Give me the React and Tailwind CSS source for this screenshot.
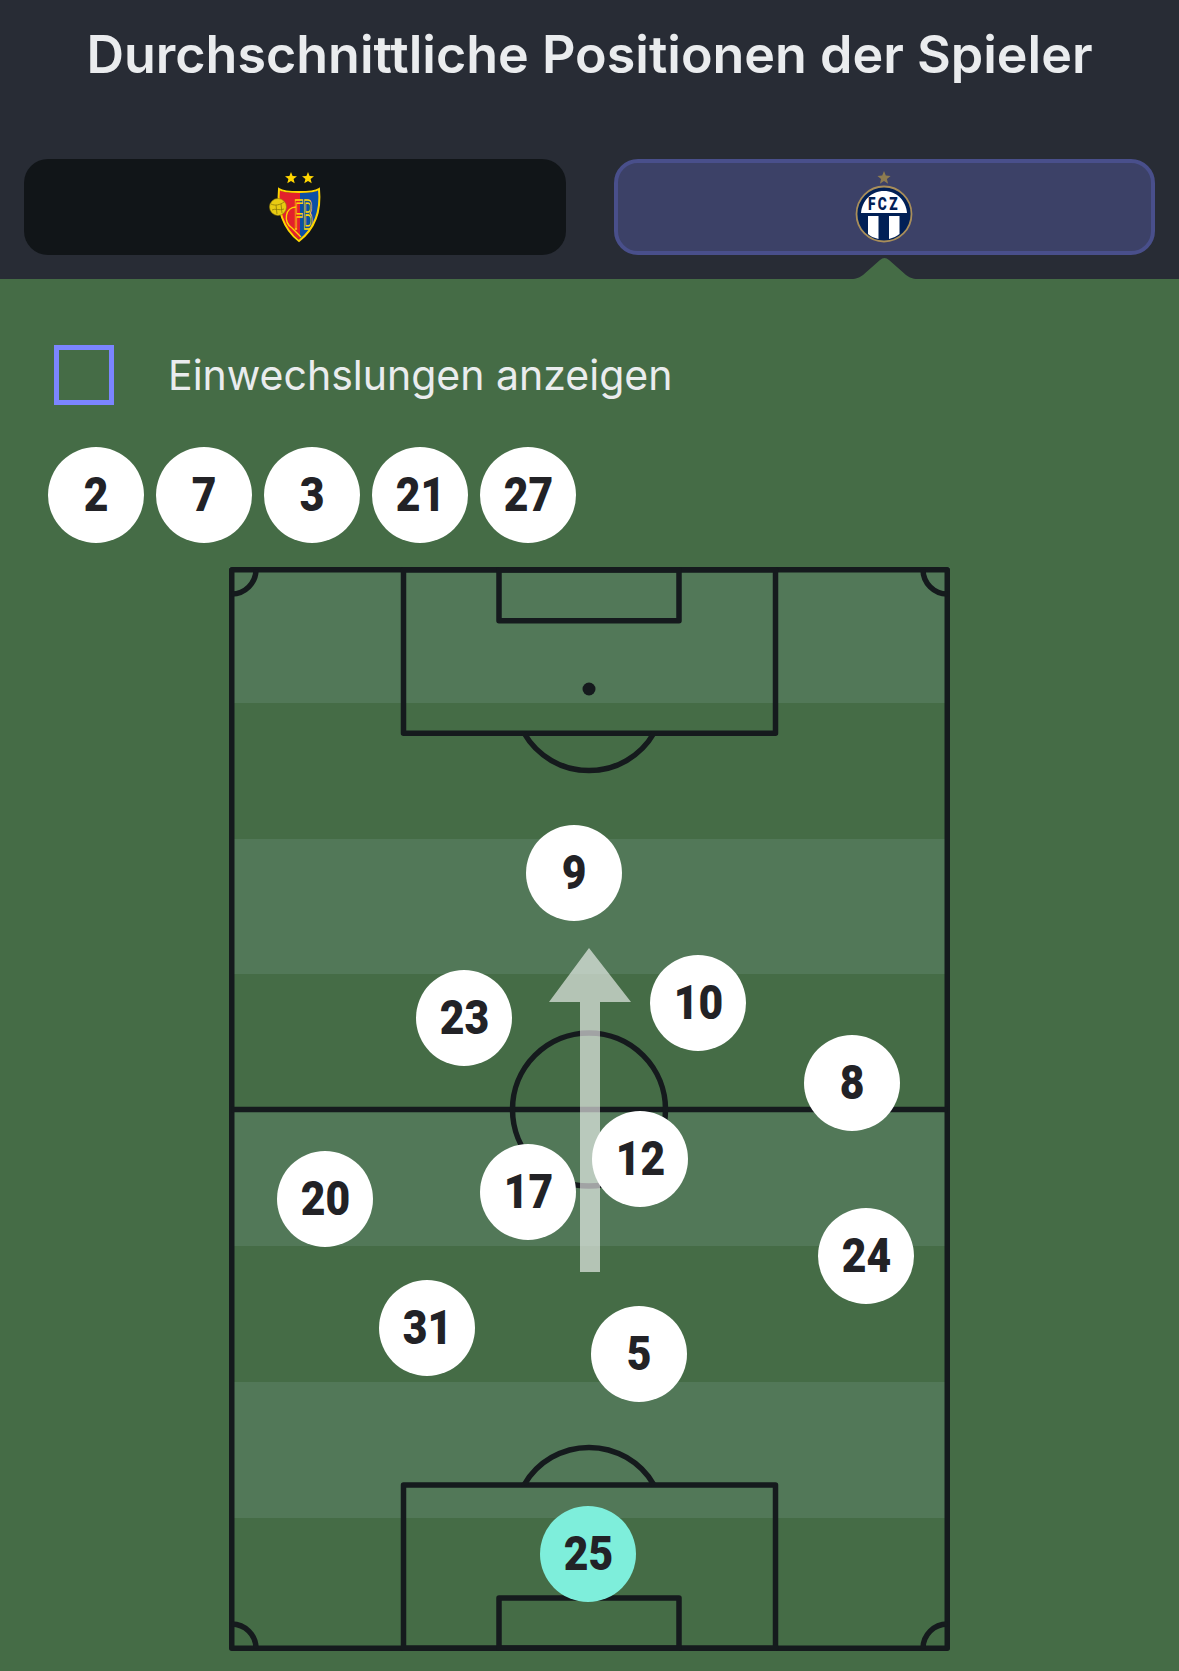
const players = [
  { n: 9, x: 345, y: 306 },
  { n: 23, x: 235, y: 451 },
  { n: 10, x: 469, y: 436 },
  { n: 8, x: 623, y: 516 },
  { n: 20, x: 96, y: 632 },
  { n: 17, x: 299, y: 625 },
  { n: 12, x: 411, y: 592 },
  { n: 24, x: 637, y: 689 },
  { n: 31, x: 198, y: 761 },
  { n: 5, x: 410, y: 787 },
  { n: 25, x: 359, y: 987, keeper: true },
];

const subs = [2, 7, 3, 21, 27];

function Circle({ n, keeper }) {
  return (
    <div
      className={`flex h-[96px] w-[96px] items-center justify-center rounded-full text-[49px] font-black leading-none text-[#222226] ${keeper ? "bg-[#7eeedb]" : "bg-white"}`}
      style={{ fontFamily: "Roboto, sans-serif" }}
    >
      <span className="inline-block -translate-y-px scale-x-[0.87]">{n}</span>
    </div>
  );
}

function FcbLogo() {
  return (
    <svg width="64" height="80" viewBox="0 0 64 80">
      <polygon points="27,6 28.6,10 33,10.3 29.6,13 30.7,17.3 27,15 23.3,17.3 24.4,13 21,10.3 25.4,10" fill="#ffd500" transform="translate(1 -1)" />
      <polygon points="27,6 28.6,10 33,10.3 29.6,13 30.7,17.3 27,15 23.3,17.3 24.4,13 21,10.3 25.4,10" fill="#ffd500" transform="translate(18 -1)" />
      <path d="M16 23 C22 26 29 26 37 25 L37 73 C26 66 17 54 16 38 Z" fill="#e3202c" />
      <path d="M37 25 C43 26 50 26 56 23 C57 40 54 60 37 74 Z" fill="#0b4fa5" />
      <path d="M16 22 C22 26 50 26 56 22 C58 42 54 60 36 74 C20 62 14 42 16 22 Z" fill="none" stroke="#ffd500" strokeWidth="2" />
      <text transform="translate(31 62) scale(0.35 1)" fontFamily="Liberation Sans, sans-serif" fontSize="42" fill="none" stroke="#ffd500" strokeWidth="1.2" style={{ vectorEffect: "non-scaling-stroke" }}>FB</text>
      <path d="M33 40 C22 40 20 55 29 61 L38 70" fill="none" stroke="#ffd500" strokeWidth="1.4" />
      <circle cx="15" cy="40" r="8.5" fill="#e8cb12" stroke="#8d7a08" strokeWidth="0.6" />
      <path d="M8 37 C12 39 17 38 21 35 M13 38 L14 47 M9 43 C12 41 17 44 21 42 M18 37 L19 46" fill="none" stroke="#8d7a08" strokeWidth="0.8" />
    </svg>
  );
}

function FczLogo() {
  return (
    <svg width="64" height="80" viewBox="0 0 64 80">
      <polygon points="32,4 33.8,8.6 38.6,8.9 34.9,12 36.1,16.7 32,14.1 27.9,16.7 29.1,12 25.4,8.9 30.2,8.6" fill="#8d7b50" />
      <circle cx="32" cy="47" r="27.5" fill="#012056" stroke="#a98e5a" strokeWidth="1.8" />
      <path d="M9 46 C10 34 19 24 32 24 C45 24 54 34 55 46 Z" fill="#fff" />
      <text transform="translate(32 43) scale(0.72 1)" textAnchor="middle" fontFamily="Roboto, sans-serif" fontWeight="900" fontSize="19" letterSpacing="3.4" fill="#012056">FCZ</text>
      <path d="M16 49 H26.5 V72 C22 71 18 69 16 67 Z" fill="#fff" />
      <path d="M37 49 H47.5 V67 C45 69 41 71 37 72 Z" fill="#fff" />
    </svg>
  );
}

function Pitch() {
  const line = "#151a1d";
  return (
    <svg className="absolute inset-0" width="721" height="1084" viewBox="0 0 721 1084">
      <rect x="0" y="0" width="721" height="136" fill="#527858" />
      <rect x="0" y="272" width="721" height="135" fill="#527858" />
      <rect x="0" y="543" width="721" height="136" fill="#527858" />
      <rect x="0" y="815" width="721" height="136" fill="#527858" />
      <g fill="none" stroke={line} strokeWidth="5.5" strokeLinejoin="round">
        <rect x="2.75" y="2.75" width="715.5" height="1078.5" />
        <line x1="2.75" y1="542.5" x2="718.25" y2="542.5" />
        <circle cx="360" cy="542.5" r="76.5" />
        <rect x="174.5" y="2.75" width="372" height="163.5" />
        <rect x="270" y="2.75" width="180" height="51" />
        <rect x="174.5" y="918" width="372" height="163.25" />
        <rect x="270" y="1031" width="180" height="50.25" />
        <path d="M295 166 A75 75 0 0 0 425 166" />
        <path d="M295 918 A75 75 0 0 1 425 918" />
        <path d="M27 2.75 A24.5 24.5 0 0 1 2.75 27" />
        <path d="M694 2.75 A24.5 24.5 0 0 0 718.25 27" />
        <path d="M2.75 1057 A24.5 24.5 0 0 1 27 1081.25" />
        <path d="M718.25 1057 A24.5 24.5 0 0 0 694 1081.25" />
      </g>
      <circle cx="360" cy="122" r="6.5" fill={line} />
      <path d="M360 381 L402 435 L371 435 L371 705 L351 705 L351 435 L320 435 Z" fill="#ffffff" fillOpacity="0.6" />
    </svg>
  );
}

export default function App() {
  return (
    <div className="w-[1179px] bg-[#456c46]" style={{ fontFamily: "Inter, sans-serif" }}>
      <div className="relative h-[279px] bg-[#282c35]">
        <h1 className="h-[159px] pt-[25px] text-center text-[52px] font-semibold leading-[60px] text-[#eaecee]">
          Durchschnittliche Positionen der Spieler
        </h1>
        <div className="grid grid-cols-2 gap-[48px] px-[24px]">
          <div className="flex h-[96px] items-center justify-center rounded-[24px] bg-[#111518]">
            <FcbLogo />
          </div>
          <div className="flex h-[96px] items-center justify-center rounded-[24px] border-4 border-[#494f8b] bg-[#3c4167]">
            <FczLogo />
          </div>
        </div>
        <svg className="absolute left-[851px] top-[257px]" width="67" height="22" viewBox="0 0 67 22">
          <path d="M0 22 C6 22 9 20 12 18 L29 3 Q33.5 -1 38 3 L55 18 C58 20 61 22 67 22 Z" fill="#456c46" />
        </svg>
      </div>

      <div className="pt-[66px] pb-[20px]">
        <div className="flex items-center gap-[54px] pl-[54px]">
          <div className="h-[60px] w-[60px] border-[5px] border-[#7b85ff]" />
          <span className="text-[41px] leading-[60px] text-[#eaecee]">Einwechslungen anzeigen</span>
        </div>

        <div className="mt-[42px] flex gap-[12px] pl-[48px]">
          {subs.map((n) => (
            <Circle key={n} n={n} />
          ))}
        </div>

        <div className="relative mx-auto mt-[24px] h-[1084px] w-[721px]">
          <Pitch />
          {players.map((p) => (
            <div key={p.n} className="absolute" style={{ left: p.x - 48, top: p.y - 48 }}>
              <Circle n={p.n} keeper={p.keeper} />
            </div>
          ))}
        </div>
      </div>
    </div>
  );
}
